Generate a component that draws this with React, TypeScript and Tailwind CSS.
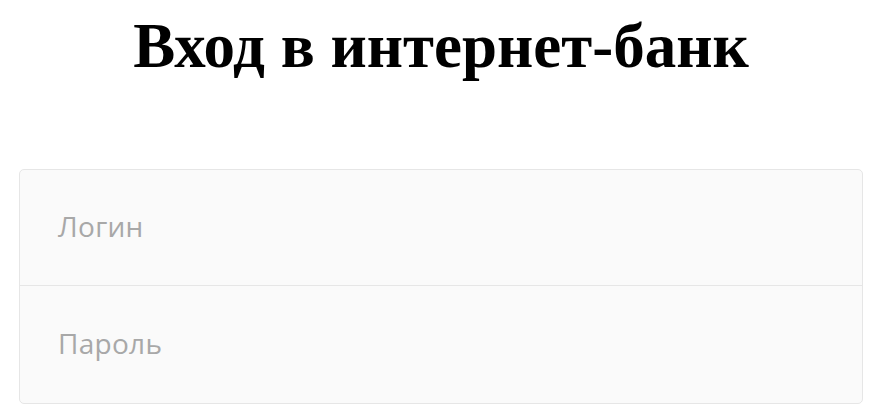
import React from 'react';

export default function App() {
  return (
    <div className="min-h-screen w-full bg-white">
      <h1 className="pt-[10px] text-center text-[63px] font-bold leading-[72px] text-black [font-family:'Liberation_Serif',serif]">
        Вход в интернет-банк
      </h1>
      <div className="mx-[19px] mt-[87px] rounded-[5px] border border-[#e6e6e6] bg-[#fafafa]">
        <div className="flex h-[116px] items-center border-b border-[#e6e6e6] pb-[3px] pl-[38px]">
          <span className="text-[28px] tracking-[0.3px] text-[#a8a8a8] [font-family:'Open_Sans',sans-serif]">Логин</span>
        </div>
        <div className="flex h-[117px] items-center pb-[3px] pl-[38px]">
          <span className="text-[28px] tracking-[0.3px] text-[#a8a8a8] [font-family:'Open_Sans',sans-serif]">Пароль</span>
        </div>
      </div>
    </div>
  );
}
